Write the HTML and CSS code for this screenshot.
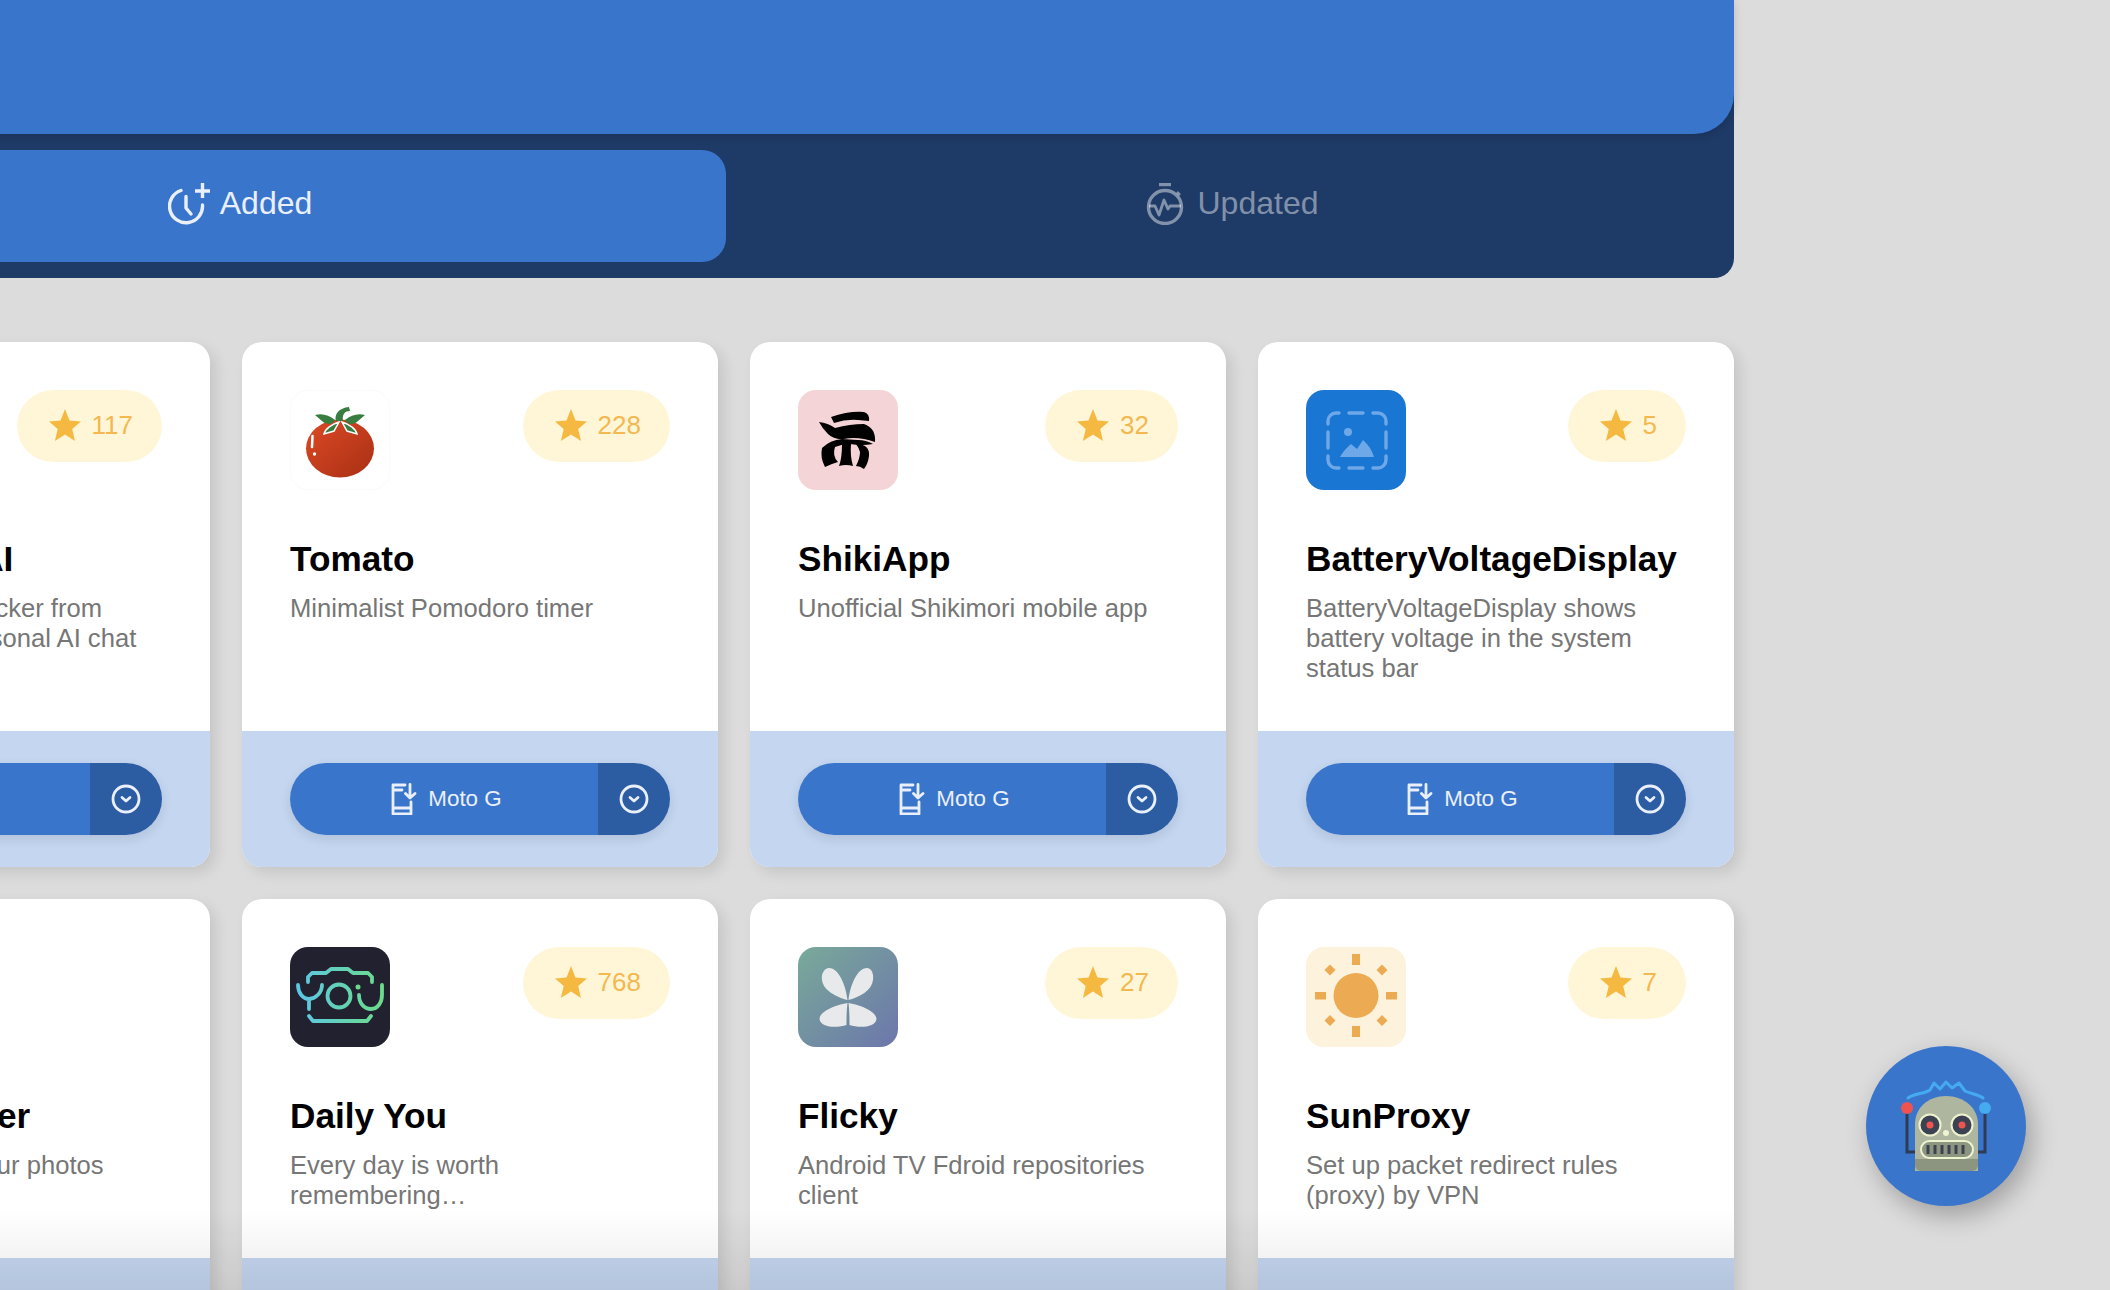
FILE: index.html
```html
<!doctype html>
<html lang="en">
<head>
    <meta charset="UTF-8">
    <title>Apps</title>
    <link rel="stylesheet" href="styles.css">
</head>
<body>
<div class="page">
    <!-- Header with the tabs -->
    <header class="header">
        <div class="banner"></div>
        <div class="tabs">
            <div class="tab active">
                <svg class="tab-icon" width="42" height="42" viewBox="0 0 42 42" fill="none" stroke="currentColor" stroke-width="3.400" stroke-linecap="round" stroke-linejoin="round">
                    <path d="M13 7.500A16.500 16.500 0 1 0 34.500 22"/>
                    <path d="M18 13.500V25l5 6"/>
                    <path d="M34.500 0v15M27 8h15" stroke-linecap="butt"/>
                </svg>
                Added
            </div>
            <div class="tab">
                <svg class="tab-icon" width="38" height="42" viewBox="0 0 38 42" fill="none" stroke="currentColor" stroke-width="3.400" stroke-linejoin="round">
                    <path d="M13 1.500h12"/>
                    <circle cx="19" cy="24" r="16.500"/>
                    <path d="M3 23h6l4 9 5-15 4 9 2-3h11" stroke-width="2.800"/>
                    <path d="M31 9l3 3" stroke-width="2.500"/>
                </svg>
                Updated
            </div>
        </div>
    </header>

    <!-- App cards -->
    <main class="grid">
        <article class="card">
            <div class="card-body">
                <div class="card-top">
                    <div class="app-icon"></div>
                    <div class="stars">
                        <svg class="star" width="32" height="32" viewBox="0 0 32 32"><path d="M16 0l4.500 11.400 11.500 1-8.800 7.600 2.800 12L16 25.600 5.900 32l2.800-12L0 12.400l11.500-1z"/></svg>
                        117
                    </div>
                </div>
                <h2 class="app-name">Food Scale AI</h2>
                <p class="app-desc">Detailed calorie tracker from pictures with a personal AI chat</p>
            </div>
            <div class="card-footer">
                <div class="install">
                    <div class="install-main">Moto G</div>
                    <div class="install-more">
                        <svg width="30" height="30" viewBox="0 0 30 30" fill="none" stroke="currentColor" stroke-width="2.800"><circle cx="15" cy="15" r="13"/><path d="M11 13.500l4 3.500 4-3.500" stroke-linecap="round" stroke-linejoin="round"/></svg>
                    </div>
                </div>
            </div>
        </article>

        <article class="card">
            <div class="card-body">
                <div class="card-top">
                    <div class="app-icon icon-tomato">
                        <svg width="100" height="100" viewBox="0 0 100 100">
                            <defs>
                                <linearGradient id="tomatoFill" x1="0" y1="0" x2="1" y2="1">
                                    <stop offset="0" stop-color="#dc4a26"/>
                                    <stop offset="1" stop-color="#a92f14"/>
                                </linearGradient>
                            </defs>
                            <ellipse cx="50" cy="58.500" rx="34" ry="29" fill="url(#tomatoFill)"/>
                            <path d="M22.500 46l-.5 11" stroke="#fff" stroke-width="2.500" fill="none" stroke-linecap="round"/>
                            <circle cx="24.500" cy="64" r="1.700" fill="#fff"/>
                            <path d="M25 25c7-2 14 0 20 5-2 5-9 5-13 1l-7-6zM75 25c-7-2-14 0-20 5 2 5 9 5 13 1l7-6z" fill="#3a7d41"/>
                            <path d="M34 44c1-5 8-10 15-12l-5 9-10 3zM67 44c-1-5-8-10-15-12l5 9 10 3z" fill="#3a7d41" stroke="#fff" stroke-width="1.500"/>
                            <path d="M46 31c-2-7 3-13 13-14l1 4c-5 0-8 3-7 10h-7z" fill="#3a7d41"/>
                        </svg>
                    </div>
                    <div class="stars">
                        <svg class="star" width="32" height="32" viewBox="0 0 32 32"><path d="M16 0l4.500 11.400 11.500 1-8.800 7.600 2.800 12L16 25.600 5.900 32l2.800-12L0 12.400l11.500-1z"/></svg>
                        228
                    </div>
                </div>
                <h2 class="app-name">Tomato</h2>
                <p class="app-desc">Minimalist Pomodoro timer</p>
            </div>
            <div class="card-footer">
                <div class="install">
                    <div class="install-main">
                        <svg width="26" height="32" viewBox="0 0 26 32" fill="none" stroke="currentColor" stroke-width="2.800" stroke-linecap="round" stroke-linejoin="round"><path d="M14 2H2v29h18V19M2 7h9M2 25h18M19 1.500v13M14.500 10.500l4.500 4.500 5-4.500"/></svg>
                        Moto G
                    </div>
                    <div class="install-more">
                        <svg width="30" height="30" viewBox="0 0 30 30" fill="none" stroke="currentColor" stroke-width="2.800"><circle cx="15" cy="15" r="13"/><path d="M11 13.500l4 3.500 4-3.500" stroke-linecap="round" stroke-linejoin="round"/></svg>
                    </div>
                </div>
            </div>
        </article>

        <article class="card">
            <div class="card-body">
                <div class="card-top">
                    <div class="app-icon icon-shiki">
                        <svg width="100" height="100" viewBox="0 0 100 100" fill="#000">
                            <path d="M33 27Q50 21 66 22 72 24 71 31L60 30Q48 29 36 33z"/>
                            <path d="M21 32Q30 33 37 38 52 34 66 34 78 38 77 52 60 46 46 49 36 50 30 44 24 38 21 32z"/>
                            <path d="M24 58Q32 50 44 49L60 50Q68 50 75 54 64 56 52 54 44 54 37 57 34 66 40 72 33 74 27 77 22 68 24 58z"/>
                            <path d="M44 54L53 54Q52 66 55 76 48 74 41 76 44 68 44 54z"/>
                            <path d="M58 54Q72 54 71 66 70 74 66 79 62 76 58 76 62 68 62 62 61 58 58 54z"/>
                        </svg>
                    </div>
                    <div class="stars">
                        <svg class="star" width="32" height="32" viewBox="0 0 32 32"><path d="M16 0l4.500 11.400 11.500 1-8.800 7.600 2.800 12L16 25.600 5.900 32l2.800-12L0 12.400l11.500-1z"/></svg>
                        32
                    </div>
                </div>
                <h2 class="app-name">ShikiApp</h2>
                <p class="app-desc">Unofficial Shikimori mobile app</p>
            </div>
            <div class="card-footer">
                <div class="install">
                    <div class="install-main">
                        <svg width="26" height="32" viewBox="0 0 26 32" fill="none" stroke="currentColor" stroke-width="2.800" stroke-linecap="round" stroke-linejoin="round"><path d="M14 2H2v29h18V19M2 7h9M2 25h18M19 1.500v13M14.500 10.500l4.500 4.500 5-4.500"/></svg>
                        Moto G
                    </div>
                    <div class="install-more">
                        <svg width="30" height="30" viewBox="0 0 30 30" fill="none" stroke="currentColor" stroke-width="2.800"><circle cx="15" cy="15" r="13"/><path d="M11 13.500l4 3.500 4-3.500" stroke-linecap="round" stroke-linejoin="round"/></svg>
                    </div>
                </div>
            </div>
        </article>

        <article class="card">
            <div class="card-body">
                <div class="card-top">
                    <div class="app-icon icon-battery">
                        <svg width="100" height="100" viewBox="0 0 100 100" fill="none" stroke="#6ea8e8" stroke-width="3.400" stroke-linecap="round">
                            <path d="M33 23h-3a8 8 0 0 0-8 8v3M22 42v16M22 66v4a8 8 0 0 0 8 8h3M43 23h14M43 78h14M67 23h5a8 8 0 0 1 8 8v3M80 42v16M80 66v4a8 8 0 0 1-8 8h-5"/>
                            <circle cx="42" cy="42" r="4" fill="#6ea8e8" stroke="none"/>
                            <path d="M34 67q3-6 11-13l6 5 6-9q8 7 11 17z" fill="#6ea8e8" stroke="none"/>
                        </svg>
                    </div>
                    <div class="stars">
                        <svg class="star" width="32" height="32" viewBox="0 0 32 32"><path d="M16 0l4.500 11.400 11.500 1-8.800 7.600 2.800 12L16 25.600 5.900 32l2.800-12L0 12.400l11.500-1z"/></svg>
                        5
                    </div>
                </div>
                <h2 class="app-name">BatteryVoltageDisplay</h2>
                <p class="app-desc">BatteryVoltageDisplay shows battery voltage in the system status bar</p>
            </div>
            <div class="card-footer">
                <div class="install">
                    <div class="install-main">
                        <svg width="26" height="32" viewBox="0 0 26 32" fill="none" stroke="currentColor" stroke-width="2.800" stroke-linecap="round" stroke-linejoin="round"><path d="M14 2H2v29h18V19M2 7h9M2 25h18M19 1.500v13M14.500 10.500l4.500 4.500 5-4.500"/></svg>
                        Moto G
                    </div>
                    <div class="install-more">
                        <svg width="30" height="30" viewBox="0 0 30 30" fill="none" stroke="currentColor" stroke-width="2.800"><circle cx="15" cy="15" r="13"/><path d="M11 13.500l4 3.500 4-3.500" stroke-linecap="round" stroke-linejoin="round"/></svg>
                    </div>
                </div>
            </div>
        </article>

        <article class="card">
            <div class="card-body">
                <div class="card-top">
                    <div class="app-icon"></div>
                </div>
                <h2 class="app-name">Photo Scanner</h2>
                <p class="app-desc">Scan and repair your photos</p>
            </div>
            <div class="card-footer"></div>
        </article>

        <article class="card">
            <div class="card-body">
                <div class="card-top">
                    <div class="app-icon icon-daily">
                        <svg width="100" height="100" viewBox="0 0 100 100" fill="none" stroke="url(#youFill)" stroke-width="3.800" stroke-linecap="round" stroke-linejoin="round">
                            <defs>
                                <linearGradient id="youFill" gradientUnits="userSpaceOnUse" x1="8" y1="0" x2="92" y2="0">
                                    <stop offset="0" stop-color="#5cc6e6"/>
                                    <stop offset="1" stop-color="#6bdc8a"/>
                                </linearGradient>
                            </defs>
                            <path d="M18 35v-5l4-4h14l5-4h17l5 4h15l4 4v5"/>
                            <path d="M8 38c0 8 5 14 11 14s13-6 13-14M19 52v10"/>
                            <circle cx="49" cy="49" r="11.500"/>
                            <circle cx="68" cy="40" r="2.500" fill="#6bdc8a" stroke="none"/>
                            <path d="M69 48c0 8 5 14 12 14s11-7 11-14V38"/>
                            <path d="M19 69l4 5h54l4-5"/>
                        </svg>
                    </div>
                    <div class="stars">
                        <svg class="star" width="32" height="32" viewBox="0 0 32 32"><path d="M16 0l4.500 11.400 11.500 1-8.800 7.600 2.800 12L16 25.600 5.900 32l2.800-12L0 12.400l11.500-1z"/></svg>
                        768
                    </div>
                </div>
                <h2 class="app-name">Daily You</h2>
                <p class="app-desc">Every day is worth remembering…</p>
            </div>
            <div class="card-footer"></div>
        </article>

        <article class="card">
            <div class="card-body">
                <div class="card-top">
                    <div class="app-icon icon-flicky">
                        <svg width="100" height="100" viewBox="0 0 100 100" fill="#e7e9ea">
                            <path d="M49.500 53C38 50 25 43 24 33c-1-7 3-12 7-12 10 0 17 18 18.500 32zM50.500 53C62 50 74 43 75 33c1-7-2-12-6-12-10 0-17 18-18.500 32zM49.500 56c-1 8-1 18-1 22-9 3-26 3-27-6 0-7 15-14 28-16zM50.500 56c1 8 1 18 1 22 9 3 26 3 27-6 0-7-15-14-28-16z"/>
                        </svg>
                    </div>
                    <div class="stars">
                        <svg class="star" width="32" height="32" viewBox="0 0 32 32"><path d="M16 0l4.500 11.400 11.500 1-8.800 7.600 2.800 12L16 25.600 5.900 32l2.800-12L0 12.400l11.500-1z"/></svg>
                        27
                    </div>
                </div>
                <h2 class="app-name">Flicky</h2>
                <p class="app-desc">Android TV Fdroid repositories client</p>
            </div>
            <div class="card-footer"></div>
        </article>

        <article class="card">
            <div class="card-body">
                <div class="card-top">
                    <div class="app-icon icon-sun">
                        <svg width="100" height="100" viewBox="0 0 100 100" fill="#ecaa52">
                            <circle cx="50" cy="48.500" r="22.500"/>
                            <path d="M46 7h8v11h-8zM46 79h8v11h-8zM9 45h11v7.500H9zM80 45h11v7.500H80zM24 17.500l5.500 5.500-5.500 5.500-5.500-5.500zM76 17.500l5.500 5.500-5.500 5.500-5.500-5.500zM24 68l5.500 5.500-5.500 5.500-5.500-5.500zM76 68l5.500 5.500-5.500 5.500-5.500-5.500z"/>
                        </svg>
                    </div>
                    <div class="stars">
                        <svg class="star" width="32" height="32" viewBox="0 0 32 32"><path d="M16 0l4.500 11.400 11.500 1-8.800 7.600 2.800 12L16 25.600 5.900 32l2.800-12L0 12.400l11.500-1z"/></svg>
                        7
                    </div>
                </div>
                <h2 class="app-name">SunProxy</h2>
                <p class="app-desc">Set up packet redirect rules (proxy) by VPN</p>
            </div>
            <div class="card-footer"></div>
        </article>
    </main>
</div>

<!-- Fade at the bottom of the window -->
<div class="bottom-fade"></div>

<!-- Robot button -->
<button class="fab">
    <svg width="160" height="160" viewBox="0 0 160 160">
        <path d="M42 52c6-5 17-4 22-8l4-7 6 6 6-7 6 6 7-5 6 8c6 3 13 3 18 7" fill="none" stroke="#45aaf0" stroke-width="3" stroke-linecap="round" stroke-linejoin="round"/>
        <path d="M41 62v44h10M119 62v44h-10" fill="none" stroke="#2f3b52" stroke-width="3"/>
        <circle cx="41" cy="62" r="6" fill="#ef5350"/>
        <circle cx="119" cy="62" r="6" fill="#45aaf0"/>
        <path d="M49 78c0-16 13-28 31-28s32 12 32 28v47H49z" fill="#aeb6a0"/>
        <path d="M49 113h63v6a6 6 0 0 1-6 6H55a6 6 0 0 1-6-6z" fill="#8c9580"/>
        <circle cx="64" cy="79" r="10.500" fill="#3d4252" stroke="#eef3d0" stroke-width="2"/>
        <circle cx="96" cy="79" r="10.500" fill="#3d4252" stroke="#eef3d0" stroke-width="2"/>
        <circle cx="64" cy="79" r="3.500" fill="#ef5350"/>
        <circle cx="96" cy="79" r="3.500" fill="#ef5350"/>
        <circle cx="80" cy="87" r="3" fill="#eef3d0"/>
        <rect x="55" y="95" width="52" height="17" rx="8.500" fill="#8c9580" stroke="#eef3d0" stroke-width="2"/>
        <path d="M62 99v9M69 99v9M76 99v9M83 99v9M90 99v9M97 99v9" stroke="#3d4252" stroke-width="3"/>
    </svg>
</button>
</body>
</html>
```

FILE: styles.css
```css
* {
    box-sizing: border-box;
}

html,
body {
    height: 100%;
}

body {
    margin: 0;
    overflow: hidden;
    background-color: #dcdcdc;
    font-family: "Liberation Sans", Arial, sans-serif;
}

/* The page is scrolled sideways, so the first column is cut off */
.page {
    width: 2000px;
    margin-left: -266px;
}

/* Header */
.header {
    background-color: #1e3a66;
    border-radius: 0 0 20px 20px;
}

.banner {
    height: 134px;
    background-color: #3a75cc;
    border-radius: 0 0 40px 40px;
    box-shadow: 0 2px 10px rgba(0, 0, 0, 0.15);
}

.tabs {
    display: grid;
    grid-template-columns: 1fr 1fr;
    gap: 16px;
    padding: 16px;
}

.tab {
    display: flex;
    align-items: center;
    justify-content: center;
    gap: 14px;
    height: 112px;
    padding: 0 0 5px 4px;
    border-radius: 24px;
    color: rgba(255, 255, 255, 0.45);
    font-size: 32px;
}

.tab.active {
    gap: 10px;
    background-color: #3a75cc;
    color: #eaf0fa;
}

/* Cards */
.grid {
    display: grid;
    grid-template-columns: repeat(4, 476px);
    gap: 32px;
    margin-top: 64px;
}

.card {
    display: flex;
    flex-direction: column;
    overflow: hidden;
    background-color: #fff;
    border-radius: 20px;
    box-shadow: 6px 6px 14px rgba(0, 0, 0, 0.1);
}

.card-body {
    flex: 1;
    padding: 48px;
}

.card-top {
    display: flex;
    justify-content: space-between;
    align-items: flex-start;
    margin-bottom: 48px;
}

.app-icon {
    width: 100px;
    height: 100px;
    overflow: hidden;
    border-radius: 18px;
}

.app-icon svg {
    display: block;
}

.icon-tomato {
    border: 1px solid #fafafa;
}

.icon-tomato svg {
    margin: -1px;
}

.icon-shiki {
    background-color: #f5d4d8;
}

.icon-battery {
    background-color: #1976d2;
}

.icon-daily {
    background-color: #22212f;
}

.icon-flicky {
    background: linear-gradient(135deg, #79aa99, #6c76ab);
}

.icon-sun {
    background-color: #fdf3dc;
}

.stars {
    display: flex;
    align-items: center;
    gap: 11px;
    height: 72px;
    padding: 0 29px 2px 32px;
    background-color: #fff6d8;
    border-radius: 36px;
    color: #f3b84f;
    font-size: 26px;
}

.star {
    fill: #f5b942;
}

.app-name {
    margin: 0 0 13px;
    color: #000;
    font-size: 35.200px;
    font-weight: 700;
    line-height: 42px;
}

.app-desc {
    margin: 0;
    color: #767676;
    font-size: 25.600px;
    line-height: 30px;
}

.card-footer {
    height: 136px;
    flex-shrink: 0;
    padding: 32px 48px;
    background-color: #c4d6f0;
}

.install {
    display: flex;
    height: 72px;
    overflow: hidden;
    border-radius: 36px;
    color: #eaf0fa;
    box-shadow: 0 4px 12px rgba(0, 0, 0, 0.1);
}

.install-main {
    flex: 1;
    display: flex;
    align-items: center;
    justify-content: center;
    gap: 11px;
    padding-left: 5px;
    background-color: #3a75cc;
    font-size: 22.400px;
}

.install-more {
    display: flex;
    align-items: center;
    justify-content: center;
    width: 72px;
    background-color: #2c5ca2;
}

/* Fade over the last row */
.bottom-fade {
    position: fixed;
    left: 0;
    bottom: 0;
    width: 1734px;
    height: 80px;
    background: linear-gradient(rgba(0, 0, 0, 0), rgba(0, 0, 0, 0.08));
    pointer-events: none;
}

/* Robot button */
.fab {
    position: fixed;
    right: 84px;
    bottom: 84px;
    width: 160px;
    height: 160px;
    padding: 0;
    border: none;
    border-radius: 50%;
    background-color: #3a75cc;
    box-shadow: 6px 10px 26px rgba(0, 0, 0, 0.28);
}

.fab svg {
    display: block;
}
```
